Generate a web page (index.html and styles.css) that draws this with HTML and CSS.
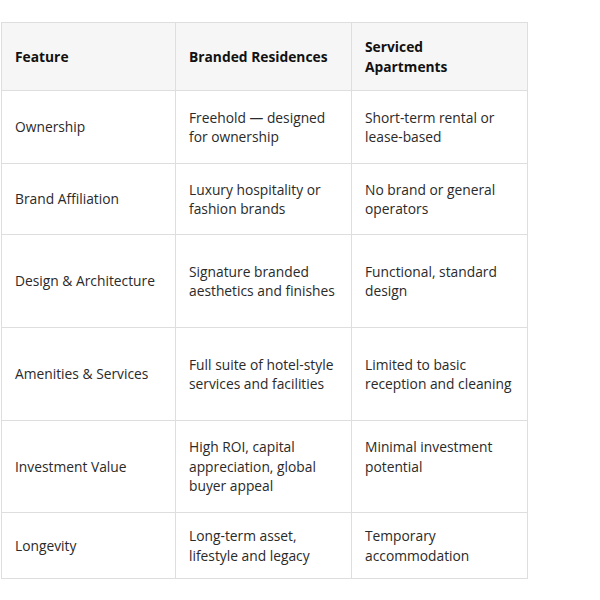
FILE: index.html
```html
<!DOCTYPE html>
<html>
<head>
<meta charset="utf-8">
<link rel="stylesheet" href="styles.css">
</head>
<body>
<table class="compare">
  <colgroup>
    <col class="c1"><col class="c2"><col class="c3">
  </colgroup>
  <thead>
    <tr class="r-head">
      <th>Feature</th>
      <th>Branded Residences</th>
      <th class="narrow">Serviced Apartments</th>
    </tr>
  </thead>
  <tbody>
    <tr class="r1">
      <td>Ownership</td>
      <td>Freehold — designed for ownership</td>
      <td>Short-term rental or lease-based</td>
    </tr>
    <tr class="r2">
      <td>Brand Affiliation</td>
      <td>Luxury hospitality or fashion brands</td>
      <td>No brand or general operators</td>
    </tr>
    <tr class="r3">
      <td>Design &amp; Architecture</td>
      <td>Signature branded aesthetics and finishes</td>
      <td>Functional, standard design</td>
    </tr>
    <tr class="r4">
      <td>Amenities &amp; Services</td>
      <td>Full suite of hotel-style services and facilities</td>
      <td>Limited to basic reception and cleaning</td>
    </tr>
    <tr class="r5">
      <td>Investment Value</td>
      <td>High ROI, capital appreciation, global buyer appeal</td>
      <td class="top">Minimal investment potential</td>
    </tr>
    <tr class="r6">
      <td>Longevity</td>
      <td>Long-term asset, lifestyle and legacy</td>
      <td>Temporary accommodation</td>
    </tr>
  </tbody>
</table>
</body>
</html>
```

FILE: styles.css
```css
html, body {
  margin: 0;
  padding: 0;
  background: #fff;
}
body {
  padding: 22px 0 0 1px;
  font-family: "Open Sans", "Liberation Sans", sans-serif;
  font-size: 13.8px;
  line-height: 19.5px;
  color: #2a2a2a;
}
.compare {
  border-collapse: collapse;
  table-layout: fixed;
  width: 526px;
}
.c1 { width: 174px; }
.c2 { width: 176px; }
.c3 { width: 176px; }
.compare th,
.compare td {
  border: 1px solid #dedede;
  padding: 0 13px;
  text-align: left;
  vertical-align: middle;
}
.compare th.narrow {
  padding-right: 24px;
}
.compare td.top {
  vertical-align: top;
  padding-top: 16px;
}
.compare th {
  background: #f6f6f6;
  font-weight: 700;
  color: #111;
}
.r-head { height: 68px; }
.r1 { height: 73px; }
.r2 { height: 71px; }
.r3 { height: 93px; }
.r4 { height: 93px; }
.r5 { height: 92px; }
.r6 { height: 66px; }
```
